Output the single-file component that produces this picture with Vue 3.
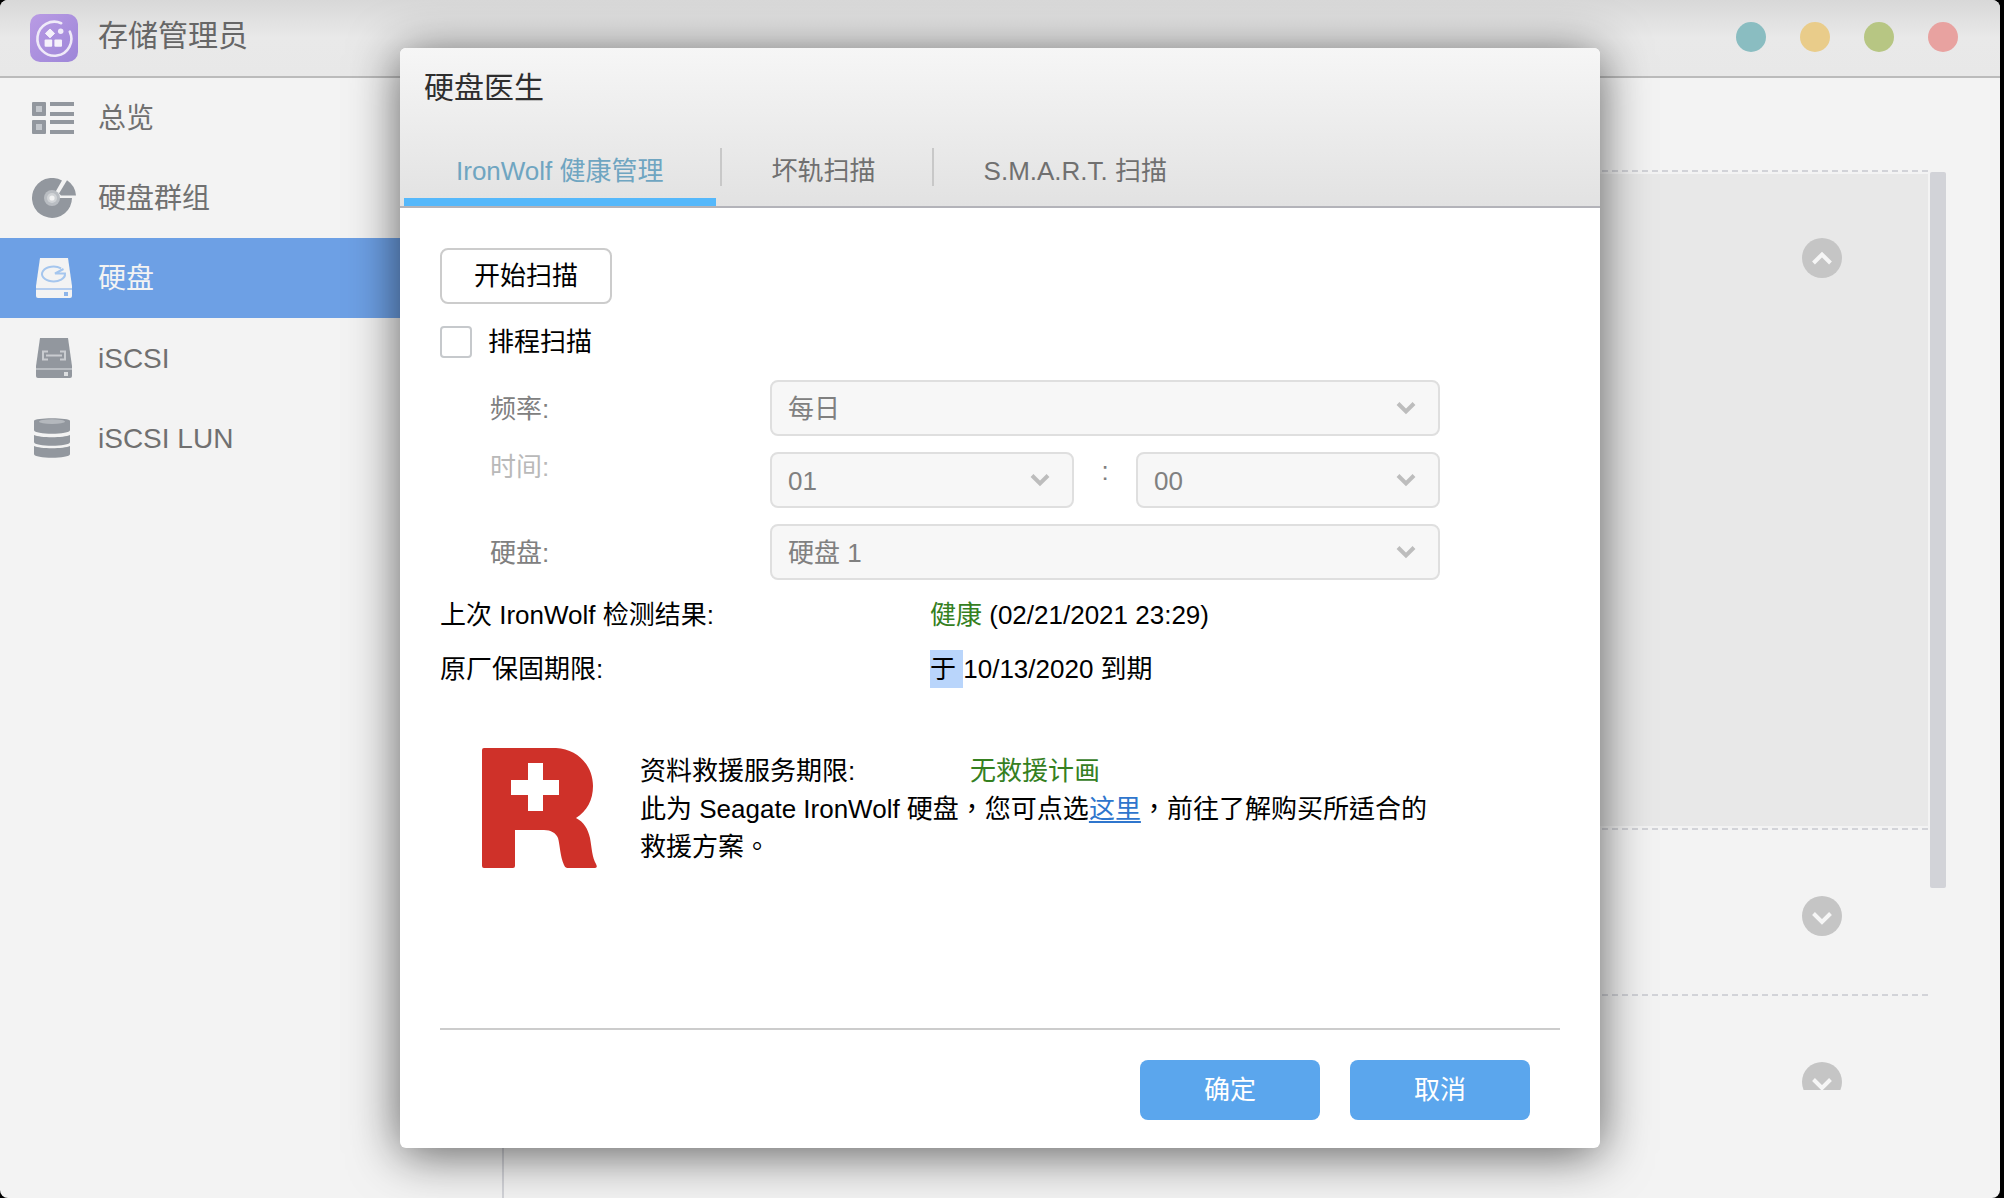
<script setup>
import { ref } from 'vue'

const navItems = [
  { id: 'overview', label: '总览' },
  { id: 'group', label: '硬盘群组' },
  { id: 'disk', label: '硬盘' },
  { id: 'iscsi', label: 'iSCSI' },
  { id: 'lun', label: 'iSCSI LUN' },
]
const activeNav = ref('disk')

const tabs = ['IronWolf 健康管理', '坏轨扫描', 'S.M.A.R.T. 扫描']
const activeTab = ref(0)

const windowControls = [
  { name: '帮助', tone: 'teal' },
  { name: '最小化', tone: 'amber' },
  { name: '最大化', tone: 'green' },
  { name: '关闭', tone: 'red' },
]

const diskRows = [
  { id: 1, open: true },
  { id: 2, open: false },
  { id: 3, open: false },
]
const scheduled = ref(false)
</script>

<template>
  <div class="window">
    <header class="titlebar">
      <svg class="app-logo" viewBox="0 0 48 48" aria-hidden="true">
        <defs>
          <linearGradient id="logoFill" x1="0" y1="0" x2="1" y2="1">
            <stop offset="0" stop-color="#b99be4" />
            <stop offset="1" stop-color="#9d86d8" />
          </linearGradient>
        </defs>
        <rect width="48" height="48" rx="10" fill="url(#logoFill)" />
        <path d="M31.2 9.2A17 17 0 1 0 39.8 17.6" fill="none" stroke="#efeaf8" stroke-width="2.6" stroke-linecap="round" />
        <path d="M20 15l4.6 4.4-4.6 4.4-4.6-4.4z" fill="#f5f1fb" stroke="#f5f1fb" stroke-width="1" stroke-linejoin="round" />
        <circle cx="30.7" cy="17.2" r="2.7" fill="#f0ebf9" />
        <rect x="14.6" y="25.4" width="7.6" height="7.4" rx="1" fill="#f5f1fb" />
        <rect x="24.4" y="25.4" width="7.6" height="7.4" rx="1" fill="#f5f1fb" />
      </svg>
      <h1 class="app-title">存储管理员</h1>
      <div class="controls">
        <button v-for="c in windowControls" :key="c.tone" type="button" class="dot" :class="c.tone" :aria-label="c.name"></button>
      </div>
    </header>

    <div class="workspace">
      <nav class="sidebar">
        <a
          v-for="item in navItems"
          :key="item.id"
          href="#"
          class="nav-item"
          :class="{ active: activeNav === item.id }"
          @click.prevent="activeNav = item.id"
        >
          <svg class="nav-icon" viewBox="0 0 44 40" aria-hidden="true">
            <g v-if="item.id === 'overview'">
              <rect x="0" y="4" width="14" height="14" rx="1" fill="#92979e" />
              <rect x="4" y="8" width="6" height="6" fill="#c3c7cc" />
              <rect x="0" y="22" width="14" height="14" rx="1" fill="#92979e" />
              <rect x="4" y="26" width="6" height="6" fill="#c3c7cc" />
              <path d="M18 4h24v4H18zM18 14h24v4H18zM18 22h24v4H18zM18 32h24v4H18z" fill="#92979e" />
            </g>
            <g v-else-if="item.id === 'group'">
              <path d="M20 20L30 2.6A20 20 0 1 0 40 20z" fill="#92979e" />
              <path d="M27 15.5L35 2.2A20 20 0 0 1 44 17.6L29 17.6z" fill="#92979e" />
              <circle cx="20" cy="20" r="8" fill="#b9bdc2" />
              <circle cx="20" cy="20" r="5" fill="#d0d3d6" />
              <circle cx="20" cy="20" r="2.6" fill="#f3f3f3" />
            </g>
            <g v-else-if="item.id === 'disk'">
              <path d="M8 0h28l4 28v2H4v-2z" fill="#f3f3f3" />
              <path d="M4 32h36v6q0 2-2 2H6q-2 0-2-2z" fill="#f3f3f3" />
              <path d="M4 30h36v2H4z" fill="#b4cdef" />
              <path d="M29 10.4A11.5 7.4 0 1 0 33 15.5L23 15.5L31.5 11" fill="none" stroke="#a5c6ee" stroke-width="2" />
              <rect x="32" y="34" width="4" height="4" fill="#8db5ea" />
            </g>
            <g v-else-if="item.id === 'iscsi'">
              <path d="M8 0h28l4 28v2H4v-2z" fill="#92979e" />
              <path d="M4 32h36v6q0 2-2 2H6q-2 0-2-2z" fill="#92979e" />
              <path d="M4 30h36v2H4z" fill="#b9bdc2" />
              <path d="M16 13.5h-5v8h5M28 13.5h5v8h-5M14 17.5h16" fill="none" stroke="#c9ccd0" stroke-width="2" />
              <rect x="32" y="34" width="4" height="4" fill="#dcdee0" />
            </g>
            <g v-else>
              <path d="M2 3C2-.6 38-.6 38 3V12C38 17 2 17 2 12z" fill="#92979e" />
              <ellipse cx="20" cy="3.6" rx="13" ry="2.4" fill="#b4b8bd" />
              <path d="M2 17C8 20 32 20 38 17V24C38 29 2 29 2 24z" fill="#92979e" />
              <path d="M2 28C8 31 32 31 38 28V36C38 41 2 41 2 36z" fill="#92979e" />
            </g>
          </svg>
          <span>{{ item.label }}</span>
        </a>
      </nav>

      <main class="content">
        <ul class="disk-list">
          <li v-for="row in diskRows" :key="row.id" class="disk-row" :class="{ open: row.open }">
            <div class="disk-panel">
              <button type="button" class="toggle" :aria-label="row.open ? '收起' : '展开'">
                <svg viewBox="0 0 40 40" aria-hidden="true">
                  <circle cx="20" cy="20" r="20" fill="#c5c5c5" />
                  <path :d="row.open ? 'M11.5 25L20 16.5L28.5 25' : 'M11.5 17.5L20 26L28.5 17.5'" fill="none" stroke="#f6f6f6" stroke-width="4" />
                </svg>
              </button>
            </div>
          </li>
        </ul>
        <div class="scroll-thumb"></div>
      </main>
    </div>

    <div class="overlay">
      <section class="dialog" role="dialog" aria-labelledby="dialog-title">
        <header class="dialog-head">
          <h2 id="dialog-title">硬盘医生</h2>
          <div class="tabs" role="tablist">
            <button
              v-for="(tab, i) in tabs"
              :key="tab"
              type="button"
              role="tab"
              class="tab"
              :class="{ selected: activeTab === i }"
              :aria-selected="activeTab === i"
              @click="activeTab = i"
            >{{ tab }}</button>
          </div>
        </header>

        <div class="dialog-body">
          <button type="button" class="scan">开始扫描</button>
          <div class="schedule">
            <input id="schedule" v-model="scheduled" type="checkbox" />
            <label for="schedule">排程扫描</label>
          </div>

          <div class="fields">
            <div class="field">
              <label for="freq">频率:</label>
              <div class="select">
                <select id="freq" disabled><option>每日</option></select>
                <svg viewBox="0 0 20 14" aria-hidden="true"><path d="M2 2.5L10 10.5L18 2.5" /></svg>
              </div>
            </div>
            <div class="field time">
              <label for="hour">时间:</label>
              <div class="select">
                <select id="hour" disabled><option>01</option></select>
                <svg viewBox="0 0 20 14" aria-hidden="true"><path d="M2 2.5L10 10.5L18 2.5" /></svg>
              </div>
              <span class="colon">:</span>
              <div class="select">
                <select id="minute" aria-label="分钟" disabled><option>00</option></select>
                <svg viewBox="0 0 20 14" aria-hidden="true"><path d="M2 2.5L10 10.5L18 2.5" /></svg>
              </div>
            </div>
            <div class="field">
              <label for="drive">硬盘:</label>
              <div class="select">
                <select id="drive" disabled><option>硬盘 1</option></select>
                <svg viewBox="0 0 20 14" aria-hidden="true"><path d="M2 2.5L10 10.5L18 2.5" /></svg>
              </div>
            </div>
          </div>

          <dl class="results">
            <div>
              <dt>上次 IronWolf 检测结果:</dt>
              <dd><span class="good">健康</span> (02/21/2021 23:29)</dd>
            </div>
            <div>
              <dt>原厂保固期限:</dt>
              <dd><span class="marked">于 </span>10/13/2020 到期</dd>
            </div>
          </dl>

          <div class="rescue">
            <svg class="rescue-logo" viewBox="0 0 116 120" role="img" aria-label="Rescue">
              <path
                fill="#cf3129"
                fill-rule="evenodd"
                d="M2 0H74C96 1 111 18 111 38C111 52 105 63 94 70C102 74 106 81 108 90C110 101 110 109 114 116Q116 120 113 120H85Q83 120 82 117C78 108 78 97 76 90C74 85 69 82 62 82H33V118Q33 120 31 120H2Q0 120 0 118V2Q0 0 2 0ZM46 15V32H29V47H46V63H61V47H77V32H61V15Z"
              />
            </svg>
            <div class="rescue-text" lang="zh-Hant">
              <div class="rescue-term">
                <span>资料救援服务期限:</span>
                <span class="good">无救援计画</span>
              </div>
              <p>此为 Seagate IronWolf 硬盘，您可点选<a href="#">这里</a>，前往了解购买所适合的救援方案。</p>
            </div>
          </div>
        </div>

        <footer class="dialog-foot">
          <button type="button">确定</button>
          <button type="button">取消</button>
        </footer>
      </section>
    </div>
  </div>
</template>

<style>
body {
  margin: 0;
  background: #000;
}
</style>

<style scoped>
* {
  box-sizing: border-box;
}

.window {
  position: relative;
  display: flex;
  flex-direction: column;
  min-height: 100vh;
  margin-right: 4px;
  border-radius: 8px;
  overflow: hidden;
  background: #f3f3f3;
  color: #000;
  font-family: "Liberation Sans", "Noto Sans CJK SC", sans-serif;
  font-size: 26px;
  line-height: 38px;
}

h1,
h2,
p,
ul,
dl,
dd {
  margin: 0;
  padding: 0;
}

h1,
h2 {
  font-size: 30px;
  font-weight: 400;
}

button,
select {
  padding: 0;
  border: 0;
  background: none;
  color: inherit;
  font: inherit;
}

/* Title bar */
.titlebar {
  display: flex;
  align-items: center;
  height: 78px;
  padding: 0 42px 0 30px;
  border-bottom: 2px solid #bbb;
  background: linear-gradient(#d8d8d8, #e9e9e9 50%, #e8e8e8);
}

.app-logo {
  width: 48px;
  height: 48px;
}

.app-title {
  margin-left: 20px;
  padding-bottom: 4px;
  color: #666;
}

.controls {
  display: flex;
  gap: 34px;
  margin-left: auto;
  padding-bottom: 2px;
}

.dot {
  width: 30px;
  height: 30px;
  border-radius: 50%;
}

.teal { background: #8abdc1; }
.amber { background: #e9cc8a; }
.green { background: #b7c683; }
.red { background: #e8a2a0; }

/* Workspace */
.workspace {
  display: flex;
  flex: 1;
}

.sidebar {
  flex: 0 0 504px;
  border-right: 2px solid #d2d3d8;
}

.nav-item {
  display: flex;
  align-items: center;
  gap: 22px;
  height: 80px;
  padding-left: 32px;
  color: #707070;
  font-size: 28px;
  text-decoration: none;
}

.nav-item.active {
  background: #6da0e5;
  color: #f3f3f3;
}

.nav-item span {
  padding-top: 2px;
}

.nav-icon {
  width: 44px;
  height: 40px;
}

.content {
  display: flex;
  flex: 1;
  gap: 2px;
  padding: 92px 54px 108px 28px;
}

.disk-list {
  flex: 1;
  height: 920px;
  overflow: hidden;
  list-style: none;
}

.disk-row {
  height: 166px;
  padding: 2px 0;
  border-top: 2px dashed #d2d3d8;
}

.disk-row.open {
  height: 658px;
}

.disk-panel {
  display: flex;
  justify-content: flex-end;
  height: 100%;
  padding: 64px 86px 0 0;
}

.open .disk-panel {
  background: #e8e8e8;
}

.toggle,
.toggle svg {
  display: block;
  width: 40px;
  height: 40px;
}

.scroll-thumb {
  width: 16px;
  height: 716px;
  margin-top: 2px;
  border-radius: 2px;
  background: #d2d3d8;
}

/* Dialog */
.overlay {
  position: absolute;
  inset: 0;
  display: flex;
  align-items: flex-start;
  justify-content: center;
  padding-top: 48px;
}

.dialog {
  width: 60%;
  border-radius: 6px;
  background: #fff;
  box-shadow: 0 6px 50px rgba(0, 0, 0, 0.62);
}

.dialog-head {
  display: flex;
  flex-direction: column;
  justify-content: space-between;
  height: 160px;
  padding-top: 21px;
  border-bottom: 2px solid #b3b3b9;
  border-radius: 6px 6px 0 0;
  background: linear-gradient(#f6f6f6, #e2e2e2);
}

.dialog-head h2 {
  padding-left: 24px;
  color: #2e2e2e;
}

.tabs {
  display: flex;
  gap: 4px;
  padding-left: 4px;
}

.tab {
  height: 58px;
  padding: 4px 52px 16px;
  color: #707070;
  white-space: nowrap;
}

.tab + .tab {
  background: linear-gradient(#c8c8c8, #c8c8c8) 0 0 / 2px 38px no-repeat;
}

.tab.selected {
  padding-bottom: 8px;
  border-bottom: 8px solid #55b8fb;
  color: #6fa5c1;
}

.dialog-body {
  min-height: 822px;
  padding: 40px 0 0;
  margin: 0 40px;
  border-bottom: 2px solid #ccc;
}

.scan {
  display: block;
  width: 172px;
  height: 56px;
  border: 2px solid #ccc;
  border-radius: 8px;
}

.schedule {
  display: flex;
  align-items: center;
  gap: 16px;
  margin-top: 22px;
  height: 32px;
}

.schedule input {
  appearance: none;
  width: 32px;
  height: 32px;
  margin: 0;
  border: 2px solid #c6c9cc;
  border-radius: 4px;
  background: #fff;
}

.fields {
  display: flex;
  flex-direction: column;
  gap: 16px;
  margin: 22px 120px 0 0;
  padding-left: 50px;
  color: #808080;
}

.field {
  display: flex;
  align-items: center;
}

.field label {
  flex: 0 0 280px;
  padding-top: 2px;
}

.time {
  align-items: flex-start;
}

.time label {
  padding-top: 0;
  color: #b9b9b9;
  line-height: 30px;
}

.select {
  position: relative;
  flex: 1;
}

.select select {
  appearance: none;
  display: block;
  width: 100%;
  height: 56px;
  padding: 2px 50px 0 16px;
  border: 2px solid #dfdfdf;
  border-radius: 8px;
  background: #f7f7f7;
  color: #808080;
  opacity: 1;
}

.select svg {
  position: absolute;
  top: 21px;
  right: 24px;
  width: 20px;
  height: 14px;
  fill: none;
  stroke: #bdbdbd;
  stroke-width: 4;
  pointer-events: none;
}

.colon {
  width: 62px;
  text-align: center;
}

.results {
  display: flex;
  flex-direction: column;
  gap: 16px;
  margin-top: 16px;
}

.results div {
  display: flex;
}

.results dt {
  flex: 0 0 490px;
}

.good {
  color: #35801f;
}

.marked {
  display: inline-block;
  white-space: pre;
  background: #b9d5fb;
}

.rescue {
  display: flex;
  gap: 42px;
  margin: 60px 120px 0 0;
  padding-left: 42px;
}

.rescue-logo {
  flex: none;
  width: 116px;
  height: 120px;
}

.rescue-text {
  padding-top: 4px;
  font-family: "Liberation Sans", "Noto Sans CJK TC", sans-serif;
}

.rescue-term {
  display: flex;
}

.rescue-term span:first-child {
  flex: 0 0 330px;
}

.rescue-text a {
  color: #2f76cd;
  text-decoration-thickness: 2px;
  text-underline-offset: 3px;
}

.dialog-foot {
  display: flex;
  justify-content: flex-end;
  gap: 30px;
  padding: 30px 70px 28px;
}

.dialog-foot button {
  width: 180px;
  height: 60px;
  border-radius: 8px;
  background: #5ba6ed;
  color: #fff;
}
</style>
